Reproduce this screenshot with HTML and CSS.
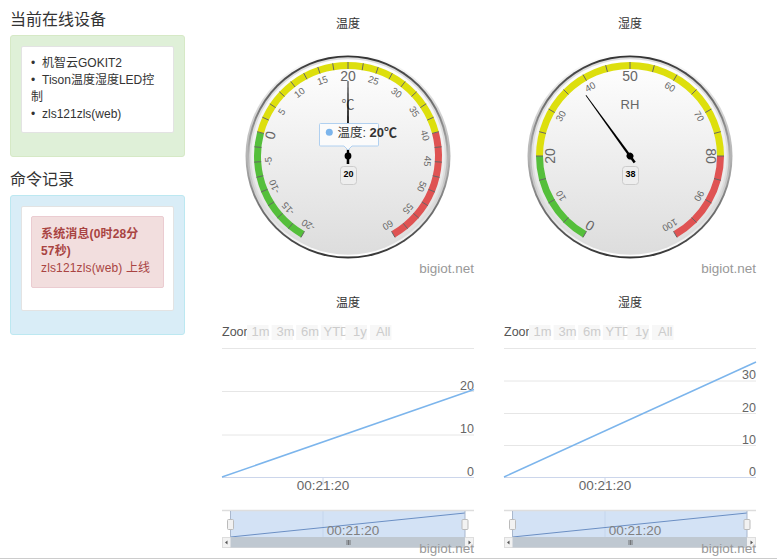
FILE: index.html
```html
<!doctype html>
<html>
<head>
<meta charset="UTF-8">
<title>bigiot | 设备面板</title>
<link rel="stylesheet" href="styles.css">
</head>

<body>
<div class="page">

  <div class="side">
    <h4 class="side-title">当前在线设备</h4>
    <div class="panel panel-green">
      <div class="well">
        <ul class="device-list">
          <li>机智云GOKIT2</li>
          <li>Tison温度湿度LED控制</li>
          <li>zls121zls(web)</li>
        </ul>
      </div>
    </div>

    <h4 class="side-title">命令记录</h4>
    <div class="panel panel-blue">
      <div class="well">
        <div class="alert">
          <strong>系统消息(0时28分<br>57秒)</strong><br>
          zls121zls(web) 上线
        </div>
      </div>
    </div>
  </div>

  <div class="charts">
    <div class="chart" id="gaugeTemp"></div>
    <div class="chart" id="gaugeHum"></div>
    <div class="chart" id="stockTemp"></div>
    <div class="chart" id="stockHum"></div>
  </div>

</div>
<script src="script.js"></script>
</body>
</html>
```

FILE: styles.css
```css
html, body {
	margin: 0;
	padding: 0;
	background: #fff;
}

body {
	font-family: "Liberation Sans", "Noto Sans CJK SC", sans-serif;
	font-size: 12px;
	line-height: 1.4286;
	color: #333;
	overflow: hidden;
}

.page {
	display: flex;
	height: 558px;
	border-bottom: 1px solid #ccc;
}

.side {
	width: 175px;
	padding: 8px 22px 0 10px;
}

.side-title {
	margin: 0 0 4px;
	font-size: 16px;
	font-weight: normal;
	line-height: 23px;
}

.panel {
	box-sizing: border-box;
	padding: 10px 10px 23px;
	margin-bottom: 11px;
	border: 1px solid;
	border-radius: 3px;
}

.panel-green {
	background: #dff0d8;
	border-color: #d6e9c6;
}

.panel-blue {
	background: #d9edf7;
	border-color: #bce8f1;
}

.well {
	padding: 8px 9px;
	background: #fff;
	border: 1px solid #e3e3e3;
	border-radius: 2px;
}

.panel-blue .well {
	padding: 9px 9px 22px;
}

.device-list {
	margin: 0;
	padding: 0;
	list-style: none;
}

.device-list li::before {
	content: "\2022";
	display: inline-block;
	width: 11px;
}

.alert {
	padding: 9px 9px 10px;
	color: #a94442;
	background: #f2dede;
	border: 1px solid #ebccd1;
	border-radius: 2px;
	letter-spacing: 0.15px;
}

.charts {
	display: grid;
	grid-template-columns: 282px 282px;
	grid-template-rows: 280px 278px;
}

.chart svg {
	display: block;
	font-family: "Liberation Sans", "Noto Sans CJK SC", sans-serif;
}

.chart-title {
	font-size: 12px;
	fill: #333;
	text-anchor: middle;
}

.credit {
	font-size: 13.5px;
	fill: #999;
	text-anchor: end;
}

.gauge-label {
	fill: #666;
	text-anchor: middle;
	dominant-baseline: central;
}

.gauge-unit {
	font-size: 13px;
	fill: #666;
	text-anchor: middle;
}

.value-box {
	fill: #eee;
	stroke: #ccc;
}

.value-text {
	font-size: 9px;
	font-weight: bold;
	fill: #000;
	text-anchor: middle;
}

.tip-box {
	fill: #fbfbfb;
	stroke: #b0d0f0;
}

.tip-text {
	font-size: 12.5px;
	fill: #333;
}

.tip-text-bold {
	font-size: 13px;
	font-weight: bold;
}

.zoom-label {
	font-size: 12.5px;
	fill: #555;
}

.range-btn {
	fill: #f7f7f7;
}

.range-text {
	font-size: 13px;
	fill: #ccc;
}

.axis-label {
	font-size: 12.5px;
	fill: #666;
	text-anchor: end;
}

.time-label {
	font-size: 13.5px;
	fill: #666;
	text-anchor: middle;
}

.nav-label {
	font-size: 13.5px;
	fill: #808080;
	text-anchor: middle;
}
```

FILE: script.js
```js
var NS_DEFS = 0;

function polar(cx, cy, r, deg) {
	var a = deg * Math.PI / 180;
	return [cx + r * Math.sin(a), cy - r * Math.cos(a)];
}

function bandPath(cx, cy, r1, r2, a1, a2) {
	var p1 = polar(cx, cy, r1, a1), p2 = polar(cx, cy, r1, a2);
	var p3 = polar(cx, cy, r2, a2), p4 = polar(cx, cy, r2, a1);
	var large = (a2 - a1) > 180 ? 1 : 0;
	return "M" + p1[0] + " " + p1[1] + "A" + r1 + " " + r1 + " 0 " + large + " 1 " + p2[0] + " " + p2[1] +
		"L" + p3[0] + " " + p3[1] + "A" + r2 + " " + r2 + " 0 " + large + " 0 " + p4[0] + " " + p4[1] + "Z";
}

/* opt: min, max, tick, labelStep, big (label values drawn larger), bands, value, unit */
function drawGauge(id, opt) {
	var cx = 141, cy = 156, s = "";
	var n = NS_DEFS++;
	var ang = function(v) { return -150 + (v - opt.min) * 300 / (opt.max - opt.min); };

	s += '<svg width="282" height="280" viewBox="0 0 282 280">';
	s += '<defs>';
	s += '<linearGradient id="down' + n + '" x1="0" y1="0" x2="0" y2="1"><stop offset="0" stop-color="#fff"/><stop offset="0.5" stop-color="#b4b4b4"/><stop offset="1" stop-color="#333"/></linearGradient>';
	s += '<linearGradient id="up' + n + '" x1="0" y1="0" x2="0" y2="1"><stop offset="0" stop-color="#333"/><stop offset="0.5" stop-color="#b4b4b4"/><stop offset="1" stop-color="#fff"/></linearGradient>';
	s += '<linearGradient id="face' + n + '" x1="0" y1="0" x2="0" y2="1"><stop offset="0" stop-color="#fff"/><stop offset="1" stop-color="#ddd"/></linearGradient>';
	s += '</defs>';
	s += '<text class="chart-title" x="141" y="28">' + opt.title + '</text>';

	// outer rings, same layering as a highcharts angular gauge
	s += '<circle cx="' + cx + '" cy="' + cy + '" r="102.5" fill="url(#down' + n + ')"/>';
	s += '<circle cx="' + cx + '" cy="' + cy + '" r="100.6" fill="url(#up' + n + ')"/>';
	s += '<circle cx="' + cx + '" cy="' + cy + '" r="98.7" fill="#ddd"/>';
	s += '<circle cx="' + cx + '" cy="' + cy + '" r="96.8" fill="url(#face' + n + ')"/>';

	opt.bands.forEach(function(b) {
		s += '<path d="' + bandPath(cx, cy, 94, 87, ang(b[0]), ang(b[1])) + '" fill="' + b[2] + '"/>';
	});

	for (var v = opt.min; v <= opt.max + 0.01; v += opt.tick) {
		var t1 = polar(cx, cy, 94, ang(v)), t2 = polar(cx, cy, 87, ang(v));
		s += '<line x1="' + t1[0] + '" y1="' + t1[1] + '" x2="' + t2[0] + '" y2="' + t2[1] + '" stroke="#666" stroke-width="1"/>';
	}

	for (v = opt.min; v <= opt.max; v += opt.labelStep) {
		var isBig = opt.big.indexOf(v) >= 0;
		var p = polar(cx, cy, isBig ? 80.5 : 80, ang(v));
		s += '<text class="gauge-label" font-size="' + (isBig ? 14 : 9.5) + '" x="' + p[0] + '" y="' + p[1] + '" transform="rotate(' + ang(v) + ' ' + p[0] + ' ' + p[1] + ')">' + v + '</text>';
	}

	s += '<text class="gauge-unit" x="' + cx + '" y="109">' + opt.unit + '</text>';

	// needle
	var a = ang(opt.value);
	s += '<g transform="rotate(' + a + ' ' + cx + ' ' + cy + ')">';
	s += '<path d="M' + (cx - 1.3) + ' ' + (cy + 8) + 'L' + (cx - 0.4) + ' ' + (cy - 75) + 'L' + (cx + 0.4) + ' ' + (cy - 75) + 'L' + (cx + 1.3) + ' ' + (cy + 8) + 'Z" fill="#000"/>';
	s += '<circle cx="' + cx + '" cy="' + cy + '" r="3.4" fill="#000"/>';
	s += '</g>';

	s += '<rect class="value-box" x="' + (cx - 7.5) + '" y="166.5" width="16" height="18" rx="3"/>';
	s += '<text class="value-text" x="' + (cx + 0.5) + '" y="177">' + opt.value + '</text>';

	if (opt.tip) {
		s += '<path class="tip-box" d="M113.5 123.5H170.5Q171.5 123.5 171.5 124.5V145Q171.5 146 170.5 146H145L141 150L137 146H113.5Q112.5 146 112.5 145V124.5Q112.5 123.5 113.5 123.5Z"/>';
		s += '<circle cx="122.3" cy="132.3" r="3.5" fill="#7cb5ec"/>';
		s += '<text class="tip-text" x="130.5" y="136.5">' + opt.tip + ': <tspan class="tip-text-bold">' + opt.value + '℃</tspan></text>';
	}

	s += '<text class="credit" x="267" y="273">bigiot.net</text>';
	s += '</svg>';
	document.getElementById(id).innerHTML = s;
}

function drawStock(id, opt) {
	var left = 15, right = 267, s = "";
	s += '<svg width="282" height="278" viewBox="0 280 282 278">';
	s += '<text class="chart-title" x="141" y="307">' + opt.title + '</text>';

	s += '<text class="zoom-label" x="' + left + '" y="335.5">Zoom</text>';
	var btns = [["1m", 44.5], ["3m", 69.5], ["6m", 94], ["YTD", 116.5], ["1y", 146], ["All", 169]];
	btns.forEach(function(b, i) {
		s += '<rect class="range-btn" x="' + (40 + i * 24.6) + '" y="325" width="21.5" height="15"/>';
		s += '<text class="range-text" x="' + b[1] + '" y="335.5">' + b[0] + '</text>';
	});

	s += '<line x1="' + left + '" y1="348.5" x2="' + right + '" y2="348.5" stroke="#e6e6e6"/>';
	opt.grid.forEach(function(g) {
		s += '<line x1="' + left + '" y1="' + g[1] + '" x2="' + right + '" y2="' + g[1] + '" stroke="' + (g[0] == 0 ? "#ccd6eb" : "#e6e6e6") + '"/>';
		s += '<text class="axis-label" x="' + right + '" y="' + (g[1] - 2) + '">' + g[0] + '</text>';
	});

	s += '<line x1="' + left + '" y1="477" x2="' + right + '" y2="' + opt.endY + '" stroke="#7cb5ec" stroke-width="1.5"/>';
	s += '<line x1="116" y1="477" x2="116" y2="485" stroke="#ccd6eb"/>';
	s += '<text class="time-label" x="116" y="490">00:21:20</text>';

	// navigator
	s += '<rect x="23.5" y="511" width="234.5" height="26" fill="#d3e2f5"/>';
	s += '<line x1="116" y1="511" x2="116" y2="537" stroke="#c4d5ec"/>';
	s += '<line x1="' + left + '" y1="510.5" x2="' + right + '" y2="510.5" stroke="#ddd" stroke-width="1.5"/>';
	s += '<line x1="23.5" y1="537" x2="258" y2="513" stroke="#6b8fc4"/>';
	s += '<line x1="23.5" y1="511" x2="23.5" y2="537" stroke="#a9b7cc"/>';
	s += '<line x1="258" y1="511" x2="258" y2="537" stroke="#a9b7cc"/>';
	[20.5, 255].forEach(function(x) {
		s += '<rect x="' + x + '" y="519.5" width="6" height="10" rx="1" fill="#f2f2f2" stroke="#bbb"/>';
	});
	s += '<text class="nav-label" x="146" y="535">00:21:20</text>';

	// scrollbar
	s += '<rect x="15.5" y="537.5" width="251" height="10" fill="#f2f2f2" stroke="#ddd"/>';
	s += '<rect x="23.5" y="537" width="234.5" height="10.5" fill="#bfc8d1"/>';
	s += '<path d="M140 540V545M141.5 540V545M143 540V545" stroke="#555" stroke-width="0.7"/>';
	s += '<path d="M20.5 540.5V544.5L18 542.5Z" fill="#555"/>';
	s += '<path d="M261.5 540.5V544.5L264 542.5Z" fill="#555"/>';

	s += '<text class="credit" x="267" y="553">bigiot.net</text>';
	s += '</svg>';
	document.getElementById(id).innerHTML = s;
}

var GREEN = "#55bf3b", YELLOW = "#dddf0d", RED = "#df5353";

drawGauge("gaugeTemp", {
	title: "温度", min: -20, max: 60, tick: 2.5, labelStep: 5, big: [0, 20], value: 20, unit: "℃", tip: "温度",
	bands: [[-20, 0, GREEN], [0, 40, YELLOW], [40, 60, RED]]
});
drawGauge("gaugeHum", {
	title: "湿度", min: 0, max: 100, tick: 5, labelStep: 10, big: [0, 20, 50, 80], value: 38, unit: "RH",
	bands: [[0, 20, GREEN], [20, 80, YELLOW], [80, 100, RED]]
});
drawStock("stockTemp", { title: "温度", endY: 389.5, grid: [[20, 391.5], [10, 435], [0, 477.5]] });
drawStock("stockHum", { title: "湿度", endY: 362, grid: [[30, 381], [20, 413.5], [10, 445.5], [0, 477.5]] });
```
